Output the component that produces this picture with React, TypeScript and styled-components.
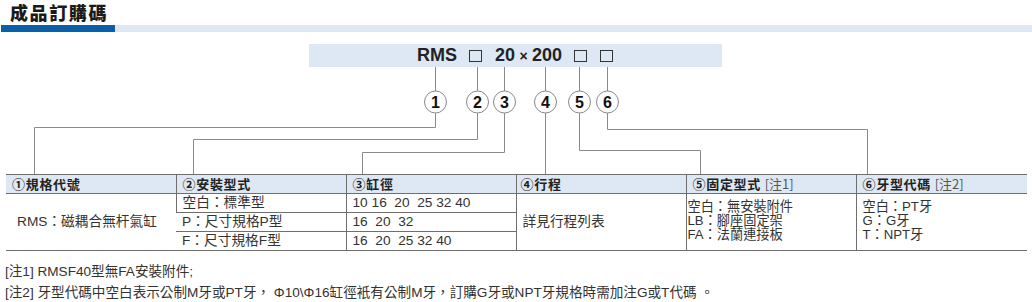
import React from 'react'
import styled, { createGlobalStyle } from 'styled-components'

const GlobalStyle = createGlobalStyle`
  body {
    margin: 0;
    background: #fff;
    font-family: 'Liberation Sans', 'Noto Sans CJK TC', sans-serif;
    color: #333;
  }
`

const LINE = '#8a8a8a'

type Connector = { x: number; bend: number; to: number; label: string }

// x of the code character, y of the elbow, x of the table column
const connectors: Connector[] = [
  { x: 435, bend: 60, to: 34, label: '1' },
  { x: 477, bend: 72, to: 193, label: '2' },
  { x: 504, bend: 85, to: 362, label: '3' },
  { x: 545, bend: 107, to: 545, label: '4' },
  { x: 579, bend: 83, to: 700, label: '5' },
  { x: 607, bend: 62, to: 867, label: '6' },
]

const CIRCLE_Y = 35
const CIRCLE_R = 11
const DIAGRAM_H = 107

const App: React.FC = () => {
  return (
    <Page>
      <GlobalStyle />
      <Title>成品訂購碼</Title>
      <TitleBar>
        <BarDark />
        <BarLight />
      </TitleBar>

      <CodeBand>
        <CodeText>RMS</CodeText>
        <CodeBox $gap={12} />
        <CodeText $gap={13}>20</CodeText>
        <Times>×</Times>
        <CodeText>200</CodeText>
        <CodeBox $gap={12} />
        <CodeBox $gap={13} />
      </CodeBand>

      <Diagram width={1032} height={DIAGRAM_H}>
        {connectors.map((c) => (
          <g key={c.label}>
            <line x1={c.x + 0.5} y1={0} x2={c.x + 0.5} y2={CIRCLE_Y - CIRCLE_R} />
            <polyline
              points={`${c.x + 0.5},${CIRCLE_Y + CIRCLE_R} ${c.x + 0.5},${c.bend + 0.5} ${c.to + 0.5},${c.bend + 0.5} ${c.to + 0.5},${DIAGRAM_H}`}
            />
            <circle cx={c.x + 0.5} cy={CIRCLE_Y} r={CIRCLE_R} />
            <Num x={c.x + 0.5} y={CIRCLE_Y + 5.5}>
              {c.label}
            </Num>
          </g>
        ))}
      </Diagram>

      <Table>
        <colgroup>
          <col style={{ width: 170 }} />
          <col style={{ width: 170 }} />
          <col style={{ width: 170 }} />
          <col style={{ width: 170 }} />
          <col style={{ width: 170 }} />
          <col style={{ width: 171 }} />
        </colgroup>
        <thead>
          <tr>
            <Th>①規格代號</Th>
            <Th>②安裝型式</Th>
            <Th>③缸徑</Th>
            <Th $pad={4}>④行程</Th>
            <Th>
              ⑤固定型式 <Ref>[注1]</Ref>
            </Th>
            <Th>
              ⑥牙型代碼 <Ref>[注2]</Ref>
            </Th>
          </tr>
        </thead>
        <tbody>
          <tr>
            <Td rowSpan={3} $pad={11}>
              RMS：磁耦合無杆氣缸
            </Td>
            <Td>空白：標準型</Td>
            <Td>10 16&nbsp; 20&nbsp; 25 32 40</Td>
            <Td rowSpan={3}>詳見行程列表</Td>
            <Td rowSpan={3} $top $pad={1}>
              空白：無安裝附件
              <br />
              LB：腳座固定架
              <br />
              FA：法蘭連接板
            </Td>
            <Td rowSpan={3} $top>
              空白：PT牙
              <br />
              G：G牙
              <br />
              T：NPT牙
            </Td>
          </tr>
          <tr>
            <Td>P：尺寸規格P型</Td>
            <Td>16&nbsp; 20&nbsp; 32</Td>
          </tr>
          <tr>
            <Td>F：尺寸規格F型</Td>
            <Td>16&nbsp; 20&nbsp; 25 32 40</Td>
          </tr>
        </tbody>
      </Table>

      <Notes>
        <Note>[注1] RMSF40型無FA安裝附件;</Note>
        <Note>
          [注2] 牙型代碼中空白表示公制M牙或PT牙， Φ10\Φ16缸徑衹有公制M牙，訂購G牙或NPT牙規格時需加注G或T代碼 。
        </Note>
      </Notes>
    </Page>
  )
}

export default App

const Page = styled.div`
  width: 1032px;
  height: 302px;
  overflow: hidden;
`

const Title = styled.h1`
  margin: 0;
  padding: 2px 0 0 10px;
  height: 23px;
  box-sizing: border-box;
  font-family: 'Noto Sans CJK TC', sans-serif;
  font-weight: 900;
  font-size: 18px;
  line-height: 20px;
  letter-spacing: 1.6px;
  color: #1a1a1a;
`

const TitleBar = styled.div`
  display: flex;
  margin-top: 2px;
  height: 7px;
`

const BarDark = styled.div`
  width: 114px;
  margin-left: 1px;
  background: #0a5fa9;
`

const BarLight = styled.div`
  flex: 1;
  background: #dde8f4;
`

const CodeBand = styled.div`
  display: flex;
  align-items: center;
  margin: 12px 0 0 309px;
  padding-left: 108px;
  width: 413px;
  height: 23px;
  box-sizing: border-box;
  background: #dde8f4;
`

const CodeText = styled.span<{ $gap?: number }>`
  margin-left: ${({ $gap }) => $gap ?? 0}px;
  font-family: 'Liberation Sans', sans-serif;
  font-weight: 700;
  font-size: 18px;
  line-height: 23px;
  color: #222;
`

const Times = styled.span`
  width: 17px;
  text-align: center;
  font-family: 'Liberation Sans', sans-serif;
  font-weight: 700;
  font-size: 14px;
  color: #222;
`

const CodeBox = styled.span<{ $gap?: number }>`
  margin-left: ${({ $gap }) => $gap ?? 0}px;
  width: 13px;
  height: 12px;
  box-sizing: border-box;
  border: 1.5px solid #333;
  background: transparent;
`

const Diagram = styled.svg`
  display: block;
  line,
  polyline {
    stroke: ${LINE};
    stroke-width: 1;
    fill: none;
  }
  circle {
    stroke: #888;
    stroke-width: 1;
    fill: #fff;
  }
`

const Num = styled.text`
  font-family: 'Liberation Sans', sans-serif;
  font-weight: 700;
  font-size: 16px;
  fill: #111;
  text-anchor: middle;
`

const Table = styled.table`
  margin-left: 6px;
  width: 1021px;
  table-layout: fixed;
  border-collapse: collapse;
  border-top: 1px solid #6e6e6e;
  border-bottom: 1px solid #6e6e6e;
  color: #333;
`

const Th = styled.th<{ $pad?: number }>`
  height: 18px;
  padding: 0 0 0 ${({ $pad }) => $pad ?? 6}px;
  background: #dde8f4;
  border-bottom: 1px solid #6e6e6e;
  border-left: 1px solid #6e6e6e;
  text-align: left;
  font-family: 'Noto Sans CJK TC', sans-serif;
  font-weight: 700;
  font-size: 13px;
  line-height: 18px;
  letter-spacing: 0.7px;
  color: #222;
  white-space: nowrap;
  &:first-child {
    border-left: none;
  }
`

const Ref = styled.span`
  font-weight: 400;
  color: #555;
  letter-spacing: 0;
`

const Td = styled.td<{ $pad?: number; $top?: boolean }>`
  height: 18px;
  padding: ${({ $top }) => ($top ? '6px' : '0')} 0 0 ${({ $pad }) => $pad ?? 6}px;
  vertical-align: ${({ $top }) => ($top ? 'top' : 'middle')};
  border-left: 1px solid #6e6e6e;
  border-bottom: 1px solid #6e6e6e;
  font-family: 'Liberation Sans', 'Noto Sans CJK TC', sans-serif;
  font-size: ${({ $top }) => ($top ? '13.2px' : '13.7px')};
  line-height: ${({ $top }) => ($top ? '14px' : '18px')};
  color: #333;
  white-space: nowrap;
  &:first-child {
    border-left: none;
  }
`

const Notes = styled.div`
  display: flex;
  flex-direction: column;
  gap: 6px;
  padding: 13px 0 0 5px;
`

const Note = styled.div`
  font-family: 'Liberation Sans', 'Noto Sans CJK TC', sans-serif;
  font-size: 13.6px;
  line-height: 15px;
  color: #333;
  white-space: nowrap;
`
